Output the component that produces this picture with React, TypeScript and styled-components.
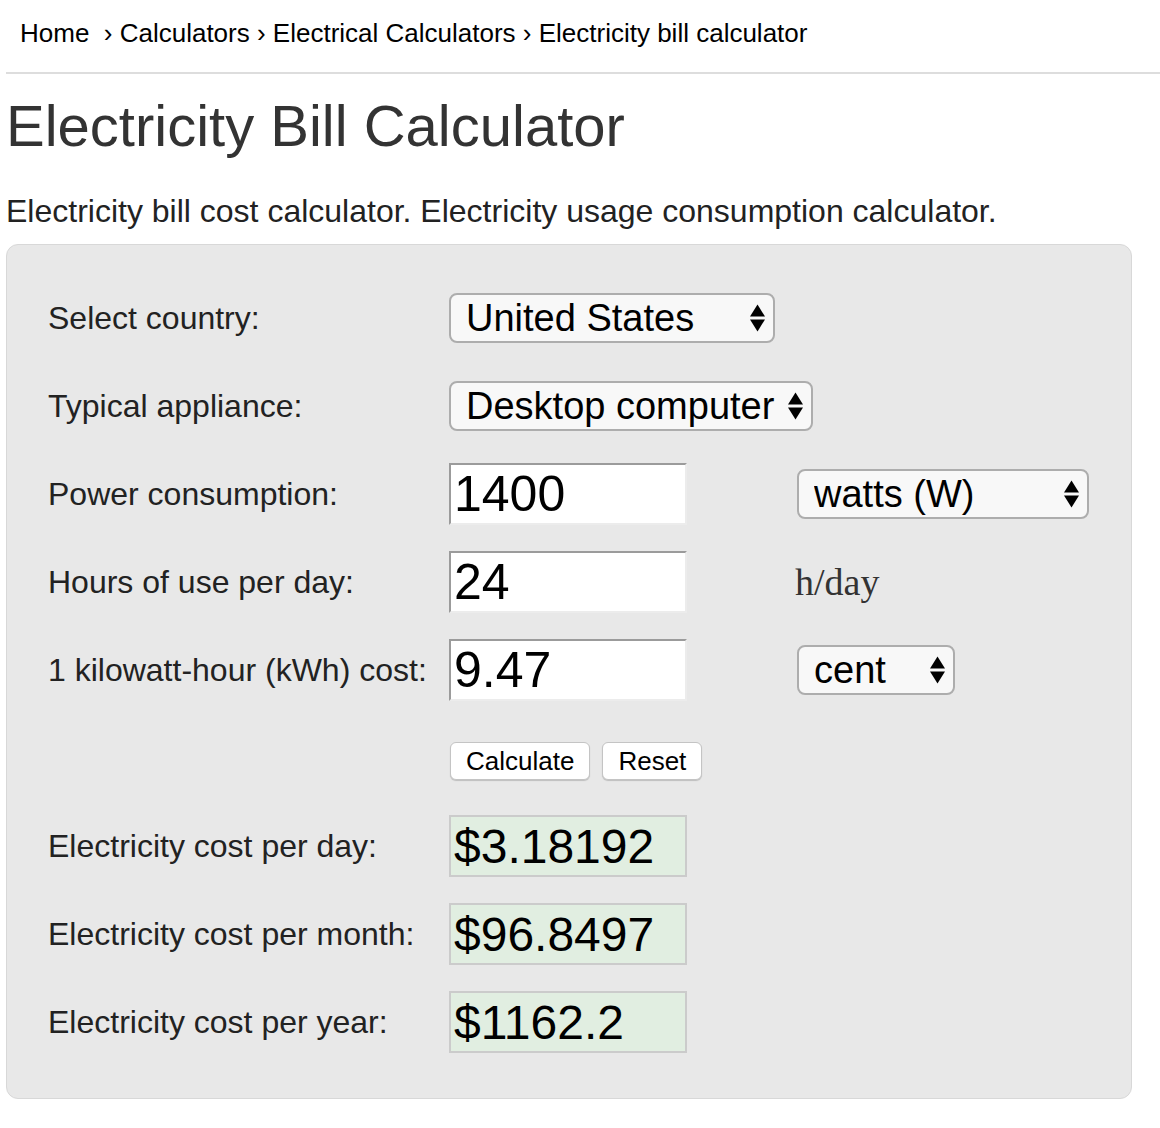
import React from "react";
import styled, { createGlobalStyle } from "styled-components";

const GlobalStyle = createGlobalStyle`
  body {
    margin: 0;
    background: #fff;
    font-family: "Liberation Sans", Arial, sans-serif;
    color: #222;
  }
`;

const Page = styled.div`
  padding-left: 6px;
  overflow: hidden;
`;

const Breadcrumb = styled.nav`
  padding: 20px 0 0 14px;
  font-size: 26px;
  line-height: 26px;
  color: #000;
  white-space: nowrap;
`;

const Rule = styled.div`
  margin-top: 26px;
  height: 2px;
  background: #ddd;
`;

const Title = styled.h1`
  margin: 23px 0 0;
  font-size: 58px;
  line-height: 58px;
  font-weight: normal;
  color: #333;
`;

const Intro = styled.p`
  margin: 40px 0 0;
  font-size: 32px;
  line-height: 32px;
  color: #222;
`;

const Panel = styled.form`
  box-sizing: border-box;
  width: 1126px;
  margin-top: 17px;
  padding: 29px 0 32px 41px;
  background: #e8e8e8;
  border: 1px solid #d8d8d8;
  border-radius: 12px;
  display: grid;
  grid-template-columns: 401px 348px 1fr;
  grid-auto-rows: 88px;
  align-items: center;
`;

const Label = styled.label`
  font-size: 32px;
  color: #222;
  white-space: nowrap;
`;

const SelectWrap = styled.div<{ $w: number }>`
  position: relative;
  width: ${(p) => p.$w}px;
  height: 50px;
`;

const Select = styled.select`
  appearance: none;
  box-sizing: border-box;
  width: 100%;
  height: 100%;
  margin: 0;
  padding: 0 36px 0 15px;
  font-family: inherit;
  font-size: 38px;
  color: #000;
  background: #f8f8f8;
  border: 2px solid #adadad;
  border-radius: 8px;
  outline: none;
`;

const Arrows = styled.svg`
  position: absolute;
  right: 9px;
  top: 11px;
  pointer-events: none;
`;

const Field = styled.input<{ $result?: boolean }>`
  box-sizing: border-box;
  width: 238px;
  height: 62px;
  margin: 0;
  padding: 0 3px;
  font-family: inherit;
  font-size: ${(p) => (p.$result ? 48 : 50)}px;
  color: #000;
  outline: none;
  border-style: solid;
  border-width: 2px;
  border-color: ${(p) => (p.$result ? "#cbcbcb" : "#9b9b9b #ececec #ececec #9b9b9b")};
  background: ${(p) => (p.$result ? "#e1eee1" : "#fff")};
`;

const Unit = styled.span`
  font-family: "Liberation Serif", "Times New Roman", serif;
  font-size: 38px;
  line-height: 1;
  color: #333;
  margin-left: -2px;
`;

const Buttons = styled.div`
  grid-column: 2 / span 2;
  display: flex;
  gap: 12px;
  margin-left: 1px;
  padding-top: 6px;
`;

const Button = styled.button`
  height: 38px;
  padding: 0 15px;
  font-family: inherit;
  font-size: 26px;
  color: #000;
  background: #fff;
  border: 1px solid #c4c4c4;
  border-radius: 6px;
  box-shadow: 0 1px 1px rgba(0, 0, 0, 0.18);
`;

const Empty = styled.span``;

const Dropdown: React.FC<{ width: number; value: string; options: string[] }> = ({ width, value, options }) => (
  <SelectWrap $w={width}>
    <Select defaultValue={value}>
      {options.map((o) => (
        <option key={o}>{o}</option>
      ))}
    </Select>
    <Arrows width="17" height="28" viewBox="0 0 17 28">
      <path d="M8.5 0.5 L16 12.5 L1 12.5 Z" fill="#000" />
      <path d="M1 15.5 L16 15.5 L8.5 27.5 Z" fill="#000" />
    </Arrows>
  </SelectWrap>
);

const App: React.FC = () => {
  return (
    <Page>
      <GlobalStyle />
      <Breadcrumb>Home&nbsp; › Calculators › Electrical Calculators › Electricity bill calculator</Breadcrumb>
      <Rule />
      <Title>Electricity Bill Calculator</Title>
      <Intro>Electricity bill cost calculator. Electricity usage consumption calculator.</Intro>
      <Panel onSubmit={(e) => e.preventDefault()}>
        <Label>Select country:</Label>
        <Dropdown width={326} value="United States" options={["United States", "United Kingdom", "Canada"]} />
        <Empty />

        <Label>Typical appliance:</Label>
        <Dropdown width={364} value="Desktop computer" options={["Desktop computer", "Laptop computer", "Refrigerator"]} />
        <Empty />

        <Label>Power consumption:</Label>
        <Field defaultValue="1400" />
        <Dropdown width={292} value="watts (W)" options={["watts (W)", "kilowatts (kW)"]} />

        <Label>Hours of use per day:</Label>
        <Field defaultValue="24" />
        <Unit>h/day</Unit>

        <Label>1 kilowatt-hour (kWh) cost:</Label>
        <Field defaultValue="9.47" />
        <Dropdown width={158} value="cent" options={["cent", "dollar"]} />

        <Empty />
        <Buttons>
          <Button type="button">Calculate</Button>
          <Button type="reset">Reset</Button>
        </Buttons>

        <Label>Electricity cost per day:</Label>
        <Field $result readOnly value="$3.18192" />
        <Empty />

        <Label>Electricity cost per month:</Label>
        <Field $result readOnly value="$96.8497" />
        <Empty />

        <Label>Electricity cost per year:</Label>
        <Field $result readOnly value="$1162.2" />
        <Empty />
      </Panel>
    </Page>
  );
};

export default App;
